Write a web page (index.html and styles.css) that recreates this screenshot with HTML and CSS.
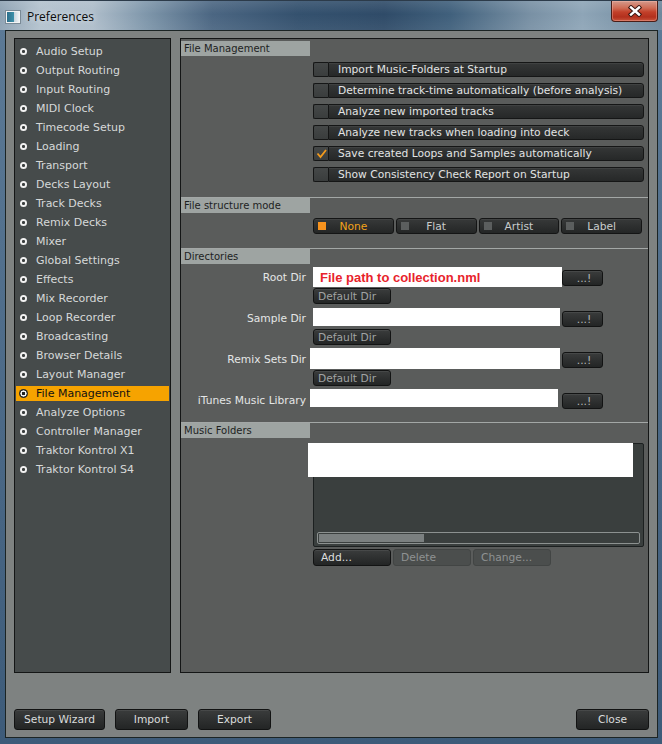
FILE: index.html
```html
<!DOCTYPE html>
<html>
<head>
<meta charset="utf-8">
<title>Preferences</title>
<link rel="stylesheet" href="styles.css">
</head>
<body>
<div class="window">
  <div class="titlebar">
    <span class="app-icon"></span>
    <span class="title">Preferences</span>
    <button class="win-close" aria-label="Close">
      <svg width="16" height="12" viewBox="0 0 16 12"><path d="M4 2.5 L12 9.5 M12 2.5 L4 9.5" stroke="#3b1510" stroke-width="4.4" stroke-linecap="square"/><path d="M4 2.5 L12 9.5 M12 2.5 L4 9.5" stroke="#ffffff" stroke-width="2.4" stroke-linecap="square"/></svg>
    </button>
  </div>
  <div class="client">
    <div class="panels">
      <ul class="nav">
        <li class="nav-item"><span class="bullet"></span>Audio Setup</li>
        <li class="nav-item"><span class="bullet"></span>Output Routing</li>
        <li class="nav-item"><span class="bullet"></span>Input Routing</li>
        <li class="nav-item"><span class="bullet"></span>MIDI Clock</li>
        <li class="nav-item"><span class="bullet"></span>Timecode Setup</li>
        <li class="nav-item"><span class="bullet"></span>Loading</li>
        <li class="nav-item"><span class="bullet"></span>Transport</li>
        <li class="nav-item"><span class="bullet"></span>Decks Layout</li>
        <li class="nav-item"><span class="bullet"></span>Track Decks</li>
        <li class="nav-item"><span class="bullet"></span>Remix Decks</li>
        <li class="nav-item"><span class="bullet"></span>Mixer</li>
        <li class="nav-item"><span class="bullet"></span>Global Settings</li>
        <li class="nav-item"><span class="bullet"></span>Effects</li>
        <li class="nav-item"><span class="bullet"></span>Mix Recorder</li>
        <li class="nav-item"><span class="bullet"></span>Loop Recorder</li>
        <li class="nav-item"><span class="bullet"></span>Broadcasting</li>
        <li class="nav-item"><span class="bullet"></span>Browser Details</li>
        <li class="nav-item"><span class="bullet"></span>Layout Manager</li>
        <li class="nav-item is-active"><span class="bullet"></span>File Management</li>
        <li class="nav-item"><span class="bullet"></span>Analyze Options</li>
        <li class="nav-item"><span class="bullet"></span>Controller Manager</li>
        <li class="nav-item"><span class="bullet"></span>Traktor Kontrol X1</li>
        <li class="nav-item"><span class="bullet"></span>Traktor Kontrol S4</li>
      </ul>

      <div class="main">
        <section class="sec sec-files">
          <h2 class="sec-head">File Management</h2>
          <div class="checks">
            <div class="check-row"><span class="chk"></span><span class="chk-label">Import Music-Folders at Startup</span></div>
            <div class="check-row"><span class="chk"></span><span class="chk-label">Determine track-time automatically (before analysis)</span></div>
            <div class="check-row"><span class="chk"></span><span class="chk-label">Analyze new imported tracks</span></div>
            <div class="check-row"><span class="chk"></span><span class="chk-label">Analyze new tracks when loading into deck</span></div>
            <div class="check-row"><span class="chk"><svg width="13" height="13" viewBox="0 0 13 13"><path d="M2.5 6.5 L5.5 10 L11 3" fill="none" stroke="#f39a1c" stroke-width="1.8"/></svg></span><span class="chk-label">Save created Loops and Samples automatically</span></div>
            <div class="check-row"><span class="chk"></span><span class="chk-label">Show Consistency Check Report on Startup</span></div>
          </div>
        </section>

        <section class="sec sec-mode">
          <h2 class="sec-head">File structure mode</h2>
          <div class="modes">
            <button class="mode is-on"><span class="led"></span>None</button>
            <button class="mode"><span class="led"></span>Flat</button>
            <button class="mode"><span class="led"></span>Artist</button>
            <button class="mode"><span class="led"></span>Label</button>
          </div>
        </section>

        <section class="sec sec-dirs">
          <h2 class="sec-head">Directories</h2>
          <div class="dirs">
            <div class="dir">
              <span class="dir-label">Root Dir</span>
              <span class="field field-root"><span class="path-note">File path to collection.nml</span></span>
              <button class="btn btn-browse">...!</button>
              <button class="btn btn-default">Default Dir</button>
            </div>
            <div class="dir">
              <span class="dir-label">Sample Dir</span>
              <span class="field field-short"></span>
              <button class="btn btn-browse">...!</button>
              <button class="btn btn-default">Default Dir</button>
            </div>
            <div class="dir">
              <span class="dir-label">Remix Sets Dir</span>
              <span class="field field-left"></span>
              <button class="btn btn-browse">...!</button>
              <button class="btn btn-default">Default Dir</button>
            </div>
            <div class="dir">
              <span class="dir-label">iTunes Music Library</span>
              <span class="field field-left field-short field-narrow"></span>
              <button class="btn btn-browse">...!</button>
            </div>
          </div>
        </section>

        <section class="sec sec-music">
          <h2 class="sec-head">Music Folders</h2>
          <div class="folders">
            <div class="folder-list">
              <span class="redact"></span>
              <div class="hscroll"><span class="hthumb"></span></div>
            </div>
            <div class="folder-actions">
              <button class="btn btn-act">Add...</button>
              <button class="btn btn-act is-disabled">Delete</button>
              <button class="btn btn-act is-disabled">Change...</button>
            </div>
          </div>
        </section>
      </div>
    </div>

    <div class="footer">
      <button class="btn btn-foot btn-wizard">Setup Wizard</button>
      <button class="btn btn-foot">Import</button>
      <button class="btn btn-foot">Export</button>
      <button class="btn btn-foot btn-close">Close</button>
    </div>
  </div>
</div>
</body>
</html>
```

FILE: styles.css
```css
html, body {
  margin: 0;
  padding: 0;
}

body {
  width: 662px;
  height: 744px;
  overflow: hidden;
  font-family: "DejaVu Sans", "Liberation Sans", sans-serif;
  background: linear-gradient(180deg, #5d7b97 0%, #4a6886 60%, #3d5b79 100%);
}

.window {
  height: 744px;
  display: flex;
  flex-direction: column;
}

/* ---------- title bar ---------- */
.titlebar {
  flex: none;
  height: 30px;
  display: flex;
  align-items: flex-start;
  background:
    linear-gradient(180deg, rgba(255,255,255,0.10) 0%, rgba(255,255,255,0) 45%, rgba(255,255,255,0.06) 100%),
    linear-gradient(90deg, #8ea2b3 0%, #b3c2ce 6%, #aebdca 14%, #7f97ab 22%, #4b6682 32%, #34516e 45%, #2f4b68 58%, #40607c 68%, #7890a4 80%, #8ea5b7 88%, #6d879c 100%);
  border-top: 1px solid #2c3b4a;
  box-sizing: border-box;
}

.app-icon {
  width: 12px;
  height: 10px;
  margin: 10px 0 0 6px;
  border: 1px solid #f4f4f4;
  background: linear-gradient(90deg, #2c6f8c 0%, #3d8fa8 55%, #c9d6de 60%, #eef2f5 100%);
  box-shadow: 0 0 0 1px #7a8a96;
}

.title {
  margin: 7px 0 0 7px;
  font-family: "Open Sans", "Noto Sans", sans-serif;
  font-size: 12px;
  color: #0b0b0b;
  text-shadow: 0 0 6px rgba(255,255,255,0.8);
}

.win-close {
  margin: 0 4px 0 auto;
  width: 47px;
  height: 21px;
  padding: 0;
  display: flex;
  align-items: center;
  justify-content: center;
  border: 1px solid #4a1e18;
  border-top: none;
  border-radius: 0 0 4px 4px;
  background: linear-gradient(180deg, #d49a8c 0%, #cf6c55 35%, #c2402a 55%, #b3301d 80%, #c8543c 100%);
  box-shadow: inset 0 0 0 1px rgba(255,200,190,0.35);
}

.win-close svg {
  display: block;
}

/* ---------- client ---------- */
.client {
  flex: 1;
  margin: 0 4px 6px 5px;
  border: 1px solid #1b2424;
  background: #7e8281;
  display: flex;
  flex-direction: column;
  padding: 7px 8px 7px 8px;
  min-height: 0;
}

.panels {
  flex: none;
  height: 635px;
  display: flex;
  gap: 9px;
}

/* ---------- nav ---------- */
.nav {
  width: 157px;
  box-sizing: border-box;
  margin: 0;
  padding: 3px 0 0;
  list-style: none;
  border: 1px solid #141616;
  background: #464b4b;
  display: flex;
  flex-direction: column;
}

.nav-item {
  height: 15px;
  margin: 2px 1px;
  padding-left: 4px;
  display: flex;
  align-items: center;
  font-size: 11px;
  color: #d6d9d9;
  white-space: nowrap;
}

.bullet {
  flex: none;
  width: 7px;
  height: 7px;
  margin-right: 9px;
  border-radius: 50%;
  background: radial-gradient(circle, #3b3f3f 0 1.3px, #f2f2f2 1.7px);
}

.nav-item.is-active {
  background: #f6a300;
  color: #111;
}

.nav-item.is-active .bullet {
  width: 9px;
  height: 9px;
  margin-left: -1px;
  margin-right: 8px;
  background: radial-gradient(circle, #222 0 1.4px, #f4f4f4 1.8px 2.9px, #2a2a2a 3.3px);
}

/* ---------- main panel ---------- */
.main {
  flex: 1;
  border: 1px solid #141616;
  background: #5a5c5b;
  display: flex;
  flex-direction: column;
}

.sec + .sec {
  border-top: 1px solid #a3a7a6;
}

.sec-head {
  margin: 0;
  width: 129px;
  height: 15px;
  line-height: 15px;
  padding-left: 3px;
  box-sizing: border-box;
  background: #9ea4a2;
  color: #1d1f1f;
  font-size: 10px;
  font-weight: normal;
}

.sec-files .sec-head {
  margin-top: 2px;
}

.checks,
.modes,
.folders {
  margin-left: 132px;
  margin-right: 4px;
}

/* checkbox rows */
.checks {
  display: flex;
  flex-direction: column;
  gap: 6px;
  padding: 6px 0 15px;
}

.check-row {
  height: 15px;
  display: flex;
}

.chk {
  flex: none;
  width: 15px;
  box-sizing: border-box;
  border: 1px solid #151616;
  border-right: none;
  border-radius: 2px 0 0 2px;
  background: linear-gradient(180deg, #454848, #3a3d3d);
  display: flex;
  align-items: center;
  justify-content: center;
}

.chk-label {
  flex: 1;
  box-sizing: border-box;
  border: 1px solid #151616;
  border-radius: 0 3px 3px 0;
  background: linear-gradient(180deg, #353737 0%, #262828 100%);
  box-shadow: inset 0 1px 0 rgba(255,255,255,0.06);
  padding-left: 9px;
  font-size: 10.7px;
  line-height: 13px;
  color: #e2e4e4;
  white-space: nowrap;
}

/* mode buttons */
.modes {
  display: flex;
  gap: 2px;
  padding: 5px 0 14px;
  margin-right: 6px;
}

.mode {
  position: relative;
  flex: 1;
  height: 16px;
  padding: 0;
  border: 1px solid #141515;
  border-radius: 3px;
  background: linear-gradient(180deg, #373939 0%, #242626 100%);
  box-shadow: inset 0 1px 0 rgba(255,255,255,0.06);
  font-family: inherit;
  font-size: 10.7px;
  color: #c9cccc;
  display: flex;
  align-items: center;
  justify-content: center;
}

.led {
  position: absolute;
  left: 4px;
  top: 3px;
  width: 8px;
  height: 8px;
  background: #5b5e5e;
}

.mode.is-on {
  color: #f2a31a;
}

.mode.is-on .led {
  background: #f7931e;
}

/* generic dark buttons */
.btn {
  box-sizing: border-box;
  padding: 0;
  border: 1px solid #121313;
  border-radius: 3px;
  background: linear-gradient(180deg, #3a3c3c 0%, #232525 100%);
  box-shadow: inset 0 1px 0 rgba(255,255,255,0.07);
  font-family: inherit;
  font-size: 10.7px;
  color: #dcdede;
  white-space: nowrap;
}

/* directories */
.dirs {
  display: flex;
  flex-direction: column;
  gap: 7px;
  padding: 6px 0 13px;
}

.dir {
  display: grid;
  grid-template-columns: 125px 256px 41px;
  grid-template-rows: 16px 16px;
  row-gap: 2px;
}

.dir:last-child {
  grid-template-rows: 16px;
}

.dir-label {
  grid-column: 1;
  grid-row: 1;
  text-align: right;
  font-size: 10.7px;
  line-height: 16px;
  color: #e4e6e6;
  white-space: nowrap;
}

.field {
  grid-column: 2;
  grid-row: 1;
  margin: -3px 0 -1px 7px;
  background: #ffffff;
  display: flex;
  align-items: center;
  position: relative;
  z-index: 1;
}

.field-short {
  margin-bottom: 1px;
  margin-right: 2px;
}

.field-left {
  margin-left: 4px;
  margin-top: -4px;
  margin-right: 2px;
}

.field-narrow {
  margin-right: 4px;
  margin-bottom: 2px;
}

.path-note {
  padding-left: 7px;
  font-family: "Liberation Sans", Arial, sans-serif;
  font-weight: bold;
  font-size: 13px;
  color: #e8232c;
}

.btn-browse {
  grid-column: 3;
  grid-row: 1;
  color: #b4b7b7;
  text-align: center;
  padding-left: 3px;
}

.btn-default {
  grid-column: 2;
  grid-row: 2;
  width: 78px;
  margin-left: 7px;
  text-align: left;
  padding-left: 4px;
  color: #a0a3a3;
}

/* music folders */
.folders {
  padding: 5px 0 0;
}

.folder-list {
  position: relative;
  height: 104px;
  box-sizing: border-box;
  border: 1px solid #1c2020;
  border-radius: 2px;
  background: #3a3f3e;
  display: flex;
  flex-direction: column;
  justify-content: flex-end;
  padding: 0 3px 2px 3px;
}

.redact {
  position: absolute;
  left: -6px;
  top: -1px;
  width: 325px;
  height: 34px;
  background: #ffffff;
}

.hscroll {
  height: 12px;
  box-sizing: border-box;
  border: 1px solid #8c9190;
  border-radius: 2px;
  background: #3a3f3e;
  padding: 1px;
  display: flex;
}

.hthumb {
  width: 105px;
  background: #7b8080;
}

.folder-actions {
  display: flex;
  gap: 2px;
  margin-top: 2px;
}

.btn-act {
  width: 78px;
  height: 17px;
  text-align: left;
  padding-left: 7px;
}

.btn-act.is-disabled {
  background: #4b4e4d;
  border-color: #424544;
  box-shadow: none;
  color: #8f9292;
}

/* footer */
.footer {
  margin-top: auto;
  display: flex;
  gap: 10px;
}

.btn-foot {
  width: 73px;
  height: 21px;
  text-align: center;
  color: #dadcdc;
}

.btn-wizard {
  width: 91px;
}

.btn-close {
  margin-left: auto;
}
```
